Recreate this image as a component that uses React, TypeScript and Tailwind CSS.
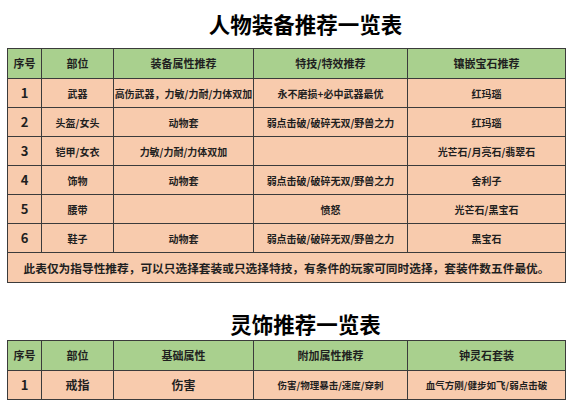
const FONT = "font-['Microsoft_YaHei','Noto_Sans_CJK_SC',sans-serif]";

const gear = [
  { no: '1', part: '武器', attr: '高伤武器，力敏/力耐/力体双加', skill: '永不磨损+必中武器最优', gem: '红玛瑙' },
  { no: '2', part: '头盔/女头', attr: '动物套', skill: '弱点击破/破碎无双/野兽之力', gem: '红玛瑙' },
  { no: '3', part: '铠甲/女衣', attr: '力敏/力耐/力体双加', skill: '', gem: '光芒石/月亮石/翡翠石' },
  { no: '4', part: '饰物', attr: '动物套', skill: '弱点击破/破碎无双/野兽之力', gem: '舍利子' },
  { no: '5', part: '腰带', attr: '', skill: '愤怒', gem: '光芒石/黑宝石' },
  { no: '6', part: '鞋子', attr: '动物套', skill: '弱点击破/破碎无双/野兽之力', gem: '黑宝石' },
];

const cell = 'border border-[#3b3b3b] text-center align-middle p-0';

function Cols() {
  return (
    <colgroup>
      <col className="w-[34px]" />
      <col className="w-[72px]" />
      <col className="w-[140px]" />
      <col className="w-[154px]" />
      <col className="w-[158px]" />
    </colgroup>
  );
}

function Head({ labels }: { labels: string[] }) {
  return (
    <tr className="h-[30px] bg-[#a9d08e] text-[11px] font-bold">
      {labels.map((l) => (
        <td key={l} className={cell}>
          {l}
        </td>
      ))}
    </tr>
  );
}

export default function App() {
  return (
    <div className={`w-[575px] h-[400px] overflow-hidden bg-white text-[#1f1f1f] ${FONT}`}>
      <div className="h-[48px] flex items-center justify-center pl-[36px] text-[21.5px] font-bold leading-[30px] text-black">
        人物装备推荐一览表
      </div>
      <table className="ml-[7px] w-[558px] table-fixed border-collapse">
        <Cols />
        <tbody>
          <Head labels={['序号', '部位', '装备属性推荐', '特技/特效推荐', '镶嵌宝石推荐']} />
          {gear.map((r) => (
            <tr key={r.no} className="h-[29px] bg-[#f8cbad] text-[10px] font-bold">
              <td className={`${cell} text-[13px]`}>{r.no}</td>
              <td className={cell}>{r.part}</td>
              <td className={`${cell} whitespace-nowrap`}>{r.attr}</td>
              <td className={`${cell} whitespace-nowrap`}>{r.skill}</td>
              <td className={cell}>{r.gem}</td>
            </tr>
          ))}
          <tr className="h-[30px] bg-[#f8cbad]">
            <td colSpan={5} className={`${cell} text-[11.7px] font-bold whitespace-nowrap`}>
              此表仅为指导性推荐，可以只选择套装或只选择特技，有条件的玩家可同时选择，套装件数五件最优。
            </td>
          </tr>
        </tbody>
      </table>
      <div className="h-[57px] flex items-end justify-center pl-[36px] pb-[1px] text-[21.5px] font-bold leading-[30px] text-black">
        灵饰推荐一览表
      </div>
      <table className="ml-[7px] w-[558px] table-fixed border-collapse">
        <Cols />
        <tbody>
          <Head labels={['序号', '部位', '基础属性', '附加属性推荐', '钟灵石套装']} />
          <tr className="h-[29px] bg-[#f8cbad] font-bold">
            <td className={`${cell} text-[13px]`}>1</td>
            <td className={`${cell} text-[12px]`}>戒指</td>
            <td className={`${cell} text-[12px]`}>伤害</td>
            <td className={`${cell} text-[9.5px] whitespace-nowrap`}>伤害/物理暴击/速度/穿刺</td>
            <td className={`${cell} text-[9.5px] whitespace-nowrap`}>血气方刚/健步如飞/弱点击破</td>
          </tr>
        </tbody>
      </table>
    </div>
  );
}
